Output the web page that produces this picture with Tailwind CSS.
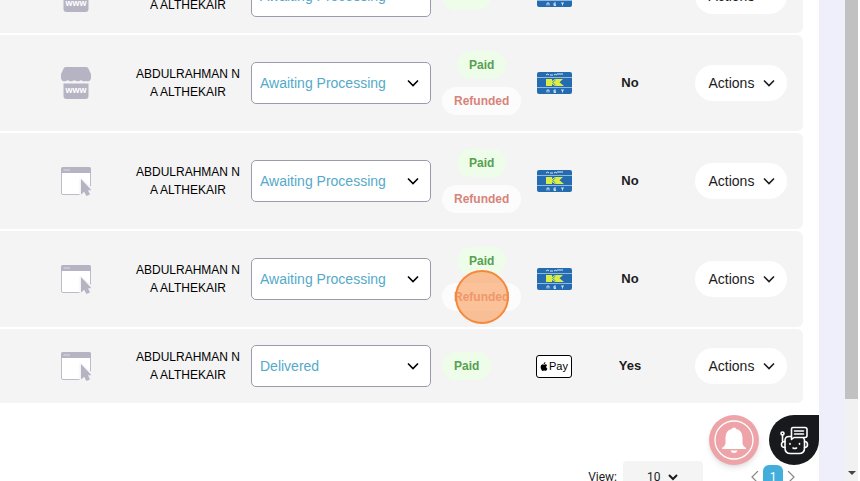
<!DOCTYPE html>
<html lang="en">
<head>
<meta charset="utf-8">
<meta name="viewport" content="width=device-width, initial-scale=1">
<title>Orders</title>
<script src="https://cdn.jsdelivr.net/npm/@tailwindcss/browser@4"></script>
</head>
<body class="flex h-screen overflow-hidden bg-white font-['Liberation_Sans',Arial,sans-serif] text-[#1c1c1c]">

<svg class="hidden" aria-hidden="true">
  <symbol id="store" viewBox="0 0 32 34">
    <path d="M6 1h20q1.500 0 2.200 1.300L31 8v3.500q0 3-3 4H4q-3-1-3-4V8l2.800-5.700Q4.500 1 6 1z" fill="#b6b3c3"/>
    <path d="M3.500 16.500h25V30q0 3-3 3h-19q-3 0-3-3z" fill="#b6b3c3"/>
    <path d="M3 15.500q1.500.5 3-.5 2-1.500 3.500 0 1.500 1 3.200 0 1.700-1.300 3.300 0 1.600 1 3.300 0 1.700-1.300 3.200 0 1.500 1 3.500 0 1.500 1 3 .5v2H3z" fill="#f4f4f4"/>
    <text x="16" y="27" text-anchor="middle" font-size="9" font-weight="700" fill="#fff">www</text>
  </symbol>
  <symbol id="window" viewBox="0 0 32 32">
    <rect x="1.500" y="2.500" width="29" height="27" rx="1.500" fill="#fff" stroke="#bdbac9"/>
    <path d="M1 8V4q0-2 2-2h26q2 0 2 2v4z" fill="#b6b3c3"/>
    <path d="M3.500 5H10" stroke="#dddbe5"/>
    <path d="M19.500 12.500v19h9.500l3-2v-7z" fill="#f4f4f4"/>
    <path d="M21 14v15.500l3.200-2.800 2.200 4.300 3.600-1.600-2-4.100h3.500z" fill="#b6b3c3"/>
  </symbol>
  <symbol id="knet" viewBox="0 0 35 22">
    <rect width="35" height="22" rx="2" fill="#256bb0"/>
    <path d="M0 5.500h35M0 15.500h35" stroke="#8fb9de"/>
    <path d="M9 3q2-2 3 0M13 3h3M17 3q1-1.500 3 0M20 2h6" stroke="#dbe9f5" stroke-width="1" fill="none"/>
    <path d="M9 7h6v2l3-2h8l-3.500 3.300L27 14h-9l-3-2v2H9z" fill="#dcee45"/>
    <path d="M18.500 8l-3 2.500 3 2.500" fill="none" stroke="#256bb0" stroke-width=".7"/>
    <path d="M10 20.500v-2.500h2v2.500M19 18h-2v2.500h2M17 19.300h2M24 18h3M25.500 18v2.500" stroke="#dbe9f5" stroke-width=".9" fill="none"/>
  </symbol>
  <symbol id="chevron" viewBox="0 0 12 8">
    <path d="M1 1.500l5 5 5-5" fill="none" stroke="currentColor" stroke-width="1.600"/>
  </symbol>
  <symbol id="apple" viewBox="0 0 16 20">
    <path d="M11 0q.3 2.400-1.200 3.700Q8.700 4.900 7.300 4.700 7.200 2.800 8.500 1.500 9.600.3 11 0zM8 6q1.300-.9 3.200-.9 2.400.1 3.700 2-2.200 1.400-2 3.900.2 2.800 2.700 3.800-.8 2.100-2.100 3.700-1.200 1.600-3 1-2.200-.9-4.200 0-1.800.7-3-.7Q.6 15.800.4 11.300.5 6 4.700 5.100 6 5 8 6z"/>
  </symbol>
</svg>

<main class="relative h-full min-w-0 flex-1 overflow-hidden pr-4">
  <table class="-mt-[43px] w-full table-fixed border-separate border-spacing-x-0 border-spacing-y-[2px]">
    <colgroup>
      <col class="w-[130px]"><col class="w-[116px]"><col class="w-[190px]"><col class="w-[92px]"><col class="w-[52px]"><col class="w-[100px]"><col>
    </colgroup>
    <tbody id="orders"></tbody>
  </table>

  <div class="mt-14 flex h-8 items-center justify-end pr-2 font-[Roboto,sans-serif] text-[12px]">
    <label for="page-size" class="mr-1.5">View:</label>
    <div class="relative mr-12">
      <select id="page-size" class="h-8 w-20 appearance-none rounded bg-[#f4f4f4] pl-6"><option>10</option><option>25</option><option>50</option></select>
      <svg class="pointer-events-none absolute top-3 right-6 h-2 w-3" aria-hidden="true" viewBox="0 0 12 8"><path d="M2 2l4 4 4-4" fill="none" stroke="#1c1c1c" stroke-width="2"/></svg>
    </div>
    <nav aria-label="Pagination" class="flex items-center gap-1">
      <a href="#" aria-label="Previous page"><svg class="h-3 w-2" viewBox="0 0 8 12"><path d="M7 0L1 6l6 6" fill="none" stroke="#888" stroke-width="1.200"/></svg></a>
      <a href="#" aria-current="page" class="flex h-6 w-5 items-center justify-center rounded-md bg-[#43aedb] text-white">1</a>
      <a href="#" aria-label="Next page"><svg class="h-3 w-2" viewBox="0 0 8 12"><path d="M1 0l6 6-6 6" fill="none" stroke="#888" stroke-width="1.200"/></svg></a>
    </nav>
  </div>

  <div class="absolute right-0 bottom-4 flex gap-2.5">
    <button aria-label="Notifications" class="size-[50px] rounded-full bg-[#eea3a8] shadow-md">
      <svg class="size-full" viewBox="0 0 50 50">
        <circle cx="25" cy="25" r="19" fill="none" stroke="#fff" stroke-width="1.300"/>
        <path d="M25 12.500q2 0 2.300 1.500 6.200 1.500 6.200 8.500v6q.5 3 3.500 4.500v1H13V33q3-1.500 3.500-4.500v-6q0-7 6.200-8.500.3-1.500 2.300-1.500zM21.500 35.500h7q-.8 2.500-3.500 2.500t-3.500-2.500z" fill="#fff"/>
      </svg>
    </button>
    <button aria-label="Chat assistant" class="size-[50px] rounded-full rounded-tr-md bg-[#17191c]">
      <svg class="size-full" viewBox="0 0 50 50" fill="none" stroke="#fff" stroke-width="1.600" stroke-linecap="round" stroke-linejoin="round">
        <path d="M22 21.500h-2q-4 0-4 4V33q0 5.500 5.500 5.500h8.500q5.500 0 5.500-5.500v-7.500q0-1.500-1-2.500"/>
        <path d="M24 12.500h12q2 0 2 2v6q0 2-2 2H25l-2.500 2V14q0-1.500 1.500-1.500zM25.500 16h9M25.500 19h9"/>
        <path d="M16 26.500q-3.500 0-3.500 3t3.500 3M35.500 26.500q3 0 3 3t-3 3M13.500 26v-6"/>
        <circle cx="13.500" cy="18.500" r="1.500"/>
        <path d="M21 28.500v.8M30.500 28.500v.8M24 33q1.800 1 3.500 0"/>
      </svg>
    </button>
  </div>
</main>
<div class="w-[26px] shrink-0 bg-[#eeeffa]"></div>
<div class="mr-[2px] flex w-[13px] shrink-0 flex-col justify-between bg-[#f1f1f1]" aria-hidden="true">
  <div class="h-[83%] bg-[#c1c1c1]"></div>
  <svg class="mb-1.5 h-1 w-2 self-center" viewBox="0 0 8 4"><path d="M0 0h8L4 4z" fill="#444"/></svg>
</div>

<template id="order-row">
  <tr class="h-24 bg-[#f4f4f4]">
    <td class="pl-[22px] text-center"><svg class="kind inline-block h-[34px] w-8" aria-hidden="true"><use/></svg></td>
    <td class="text-center text-[12px] leading-[18px] text-black">ABDULRAHMAN N<br>A ALTHEKAIR</td>
    <td class="px-[5px]">
      <div class="relative">
        <select aria-label="Order status" class="block h-[42px] w-full appearance-none rounded-[5px] border border-[#9c9bad] bg-white pl-2 text-[14px] text-[#54a9c9]"><option>Awaiting Processing</option><option>Delivered</option></select>
        <svg class="pointer-events-none absolute top-[17px] right-3 h-2 w-3 text-black" aria-hidden="true"><use href="#chevron"/></svg>
      </div>
    </td>
    <td class="pl-1.5">
      <div class="inline-flex flex-col items-center gap-2 align-middle text-[12px] leading-[28px] font-bold">
        <span class="rounded-full bg-[#eefde9] px-3 text-[#57a04f]">Paid</span>
        <span class="refund relative rounded-full bg-[#fcfcfc] px-3 text-[#d8837a]">Refunded</span>
      </div>
    </td>
    <td class="pay text-center"></td>
    <td class="printed text-center text-[13px] font-bold"></td>
    <td class="rounded-r-md pr-0.5 text-center">
      <button class="inline-flex h-9 w-[92px] items-center justify-between rounded-full bg-white pr-3 pl-3.5 align-middle text-[14px]">Actions<svg class="h-2 w-3" aria-hidden="true"><use href="#chevron"/></svg></button>
    </td>
  </tr>
</template>
<template id="knet-card"><svg class="mx-auto block h-[22px] w-[35px]" role="img" aria-label="KNET"><use href="#knet"/></svg></template>
<template id="apple-card"><span class="inline-flex h-[23px] w-9 items-center justify-center gap-px rounded-[3px] border border-black bg-white align-middle text-[11px] text-black"><svg class="h-[9px] w-2" aria-hidden="true"><use href="#apple"/></svg>Pay</span></template>
<template id="click-ring"><span class="absolute top-1/2 left-1/2 size-[54px] -translate-1/2 rounded-full border-2 border-[#f5883a] bg-[#fba263]/65"></span></template>

<script>
  const orders = [
    { kind: 'store', status: 'Awaiting Processing', refunded: false, pay: 'knet', printed: 'No' },
    { kind: 'store', status: 'Awaiting Processing', refunded: true, pay: 'knet', printed: 'No' },
    { kind: 'window', status: 'Awaiting Processing', refunded: true, pay: 'knet', printed: 'No' },
    { kind: 'window', status: 'Awaiting Processing', refunded: true, pay: 'knet', printed: 'No', marked: true },
    { kind: 'window', status: 'Delivered', refunded: false, pay: 'apple', printed: 'Yes' },
  ];
  const copy = id => document.getElementById(id).content.cloneNode(true);
  for (const o of orders) {
    const row = copy('order-row');
    row.querySelector('.kind use').setAttribute('href', '#' + o.kind);
    row.querySelector('select').value = o.status;
    row.querySelector('.pay').append(copy(o.pay + '-card'));
    row.querySelector('.printed').textContent = o.printed;
    const refund = row.querySelector('.refund');
    if (o.marked) refund.append(copy('click-ring'));
    if (!o.refunded) {
      refund.remove();
      row.querySelector('tr').classList.replace('h-24', 'h-[74px]');
    }
    document.getElementById('orders').append(row);
  }
</script>
</body>
</html>
